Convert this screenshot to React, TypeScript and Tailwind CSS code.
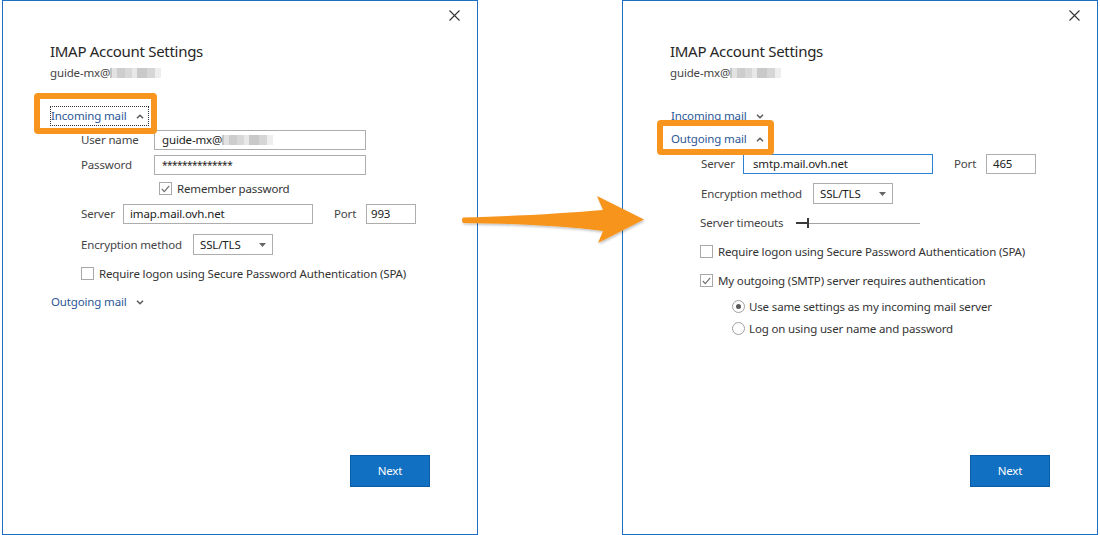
import React from "react";

function CloseIcon() {
  return (
    <svg width="11" height="11" viewBox="0 0 11 11">
      <path d="M0.5 0.5 L10.5 10.5 M10.5 0.5 L0.5 10.5" stroke="#333" strokeWidth="1.1" />
    </svg>
  );
}

function Chevron({ up }: { up?: boolean }) {
  return (
    <svg width="8" height="5" viewBox="0 0 8 5" className="shrink-0">
      <path
        d={up ? "M1 4.3 L4 1.3 L7 4.3" : "M1 0.8 L4 3.8 L7 0.8"}
        fill="none"
        stroke="#5a5a5a"
        strokeWidth="1.5"
      />
    </svg>
  );
}

// pixelated grey blur that hides the domain in the screenshot
function Blurred() {
  return (
    <span className="inline-flex h-[10px] items-center blur-[0.5px]">
      <span className="h-full w-[2px] bg-[#c4c4c4]" />
      <span className="h-full w-[5px] bg-[#e2e2e2]" />
      <span className="h-full w-[8px] bg-[#cdcdcd]" />
      <span className="h-full w-[7px] bg-[#d8d8d8]" />
      <span className="h-full w-[5px] bg-[#e8e8e8]" />
      <span className="h-full w-[10px] bg-[#c9c9c9]" />
      <span className="h-full w-[8px] bg-[#d6d6d6]" />
      <span className="h-full w-[6px] bg-[#eeeeee]" />
    </span>
  );
}

function Checkbox({ checked }: { checked?: boolean }) {
  return (
    <span className="inline-flex h-[13px] w-[13px] shrink-0 items-center justify-center border border-[#a8a8a8] bg-white">
      {checked && (
        <svg width="9" height="8" viewBox="0 0 9 8">
          <path d="M0.8 4 L3.3 6.6 L8.2 0.8" fill="none" stroke="#707070" strokeWidth="1.2" />
        </svg>
      )}
    </span>
  );
}

function Radio({ checked }: { checked?: boolean }) {
  return (
    <span className="inline-flex h-[13px] w-[13px] shrink-0 items-center justify-center rounded-full border border-[#a0a0a0] bg-white">
      {checked && <span className="h-[5px] w-[5px] rounded-full bg-[#595959]" />}
    </span>
  );
}

function Select() {
  return (
    <div className="flex h-[21px] w-[80px] items-center justify-between border border-[#adadad] pl-[6px] pr-[6px] text-[#222]">
      <span>SSL/TLS</span>
      <svg width="7" height="4" viewBox="0 0 7 4">
        <path d="M0 0 H7 L3.5 4 Z" fill="#666" />
      </svg>
    </div>
  );
}

function NextButton() {
  return (
    <div className="mb-[47px] ml-[347px] mt-auto flex h-[32px] w-[80px] items-center justify-center border border-[#0b5ca6] bg-[#1170c1] text-white">
      Next
    </div>
  );
}

function Header() {
  return (
    <>
      <div className="flex justify-end pr-[17px] pt-[9px]">
        <CloseIcon />
      </div>
      <div className="ml-[47px] mt-[19px] text-[15px] leading-[22px] tracking-[-0.3px] text-[#262626]">
        IMAP Account Settings
      </div>
      <div className="ml-[47px] mt-[3px] flex h-[16px] items-center text-[#444]">
        guide-mx@
        <Blurred />
      </div>
    </>
  );
}

function IncomingDialog() {
  return (
    <div className="relative flex h-[535px] w-[476px] shrink-0 flex-col border border-[#1d6fc1] bg-white">
      <Header />

      {/* Incoming mail (expanded, focused) */}
      <div className="ml-[47px] mt-[25px] flex h-[20px] w-[99px] items-center border border-dotted border-[#333] text-[#2b5797]">
        <span>Incoming mail</span>
        <span className="ml-[9px] flex">
          <Chevron up />
        </span>
      </div>

      <div className="ml-[78px] mt-[4px] flex h-[20px] items-center text-[#444]">
        <span className="w-[73px]">User name</span>
        <div className="flex h-[20px] w-[212px] items-center border border-[#adadad] pl-[7px] text-[#222]">
          guide-mx@
          <Blurred />
        </div>
      </div>

      <div className="ml-[78px] mt-[5px] flex h-[20px] items-center text-[#444]">
        <span className="w-[73px]">Password</span>
        <div className="flex h-[20px] w-[212px] items-center border border-[#adadad] pl-[7px] text-[10px] tracking-[-0.5px] text-[#222]">
          **************
        </div>
      </div>

      <div className="ml-[156px] mt-[5px] flex h-[17px] items-center gap-[5px] text-[#333]">
        <Checkbox checked />
        <span>Remember password</span>
      </div>

      <div className="ml-[78px] mt-[7px] flex h-[20px] items-center text-[#444]">
        <span className="w-[42px]">Server</span>
        <div className="flex h-[20px] w-[190px] items-center border border-[#adadad] pl-[6px] text-[#222]">
          imap.mail.ovh.net
        </div>
        <span className="ml-[21px] w-[32px]">Port</span>
        <div className="flex h-[20px] w-[50px] items-center border border-[#adadad] pl-[4px] text-[#222]">
          993
        </div>
      </div>

      <div className="ml-[78px] mt-[10px] flex h-[21px] items-center text-[#444]">
        <span className="w-[112px]">Encryption method</span>
        <Select />
      </div>

      <div className="ml-[78px] mt-[10px] flex h-[17px] items-center gap-[5px] text-[#333]">
        <Checkbox />
        <span>Require logon using Secure Password Authentication (SPA)</span>
      </div>

      <div className="ml-[48px] mt-[10px] flex h-[20px] items-center gap-[9px] text-[#2b5797]">
        <span>Outgoing mail</span>
        <Chevron />
      </div>

      <NextButton />

      {/* annotation frame */}
      <div className="absolute left-[31px] top-[92px] h-[41px] w-[123px] rounded-[4px] border-[6px] border-[#f7951f]" />
    </div>
  );
}

function OutgoingDialog() {
  return (
    <div className="relative flex h-[535px] w-[476px] shrink-0 flex-col border border-[#1d6fc1] bg-white">
      <Header />

      <div className="ml-[48px] mt-[25px] flex h-[20px] items-center gap-[9px] text-[#2b5797]">
        <span>Incoming mail</span>
        <Chevron />
      </div>

      <div className="ml-[48px] mt-[3px] flex h-[20px] items-center gap-[9px] text-[#2b5797]">
        <span>Outgoing mail</span>
        <Chevron up />
      </div>

      <div className="ml-[78px] mt-[5px] flex h-[20px] items-center text-[#444]">
        <span className="w-[42px]">Server</span>
        <div className="flex h-[20px] w-[190px] items-center border border-[#2f82d3] pl-[9px] text-[#222]">
          smtp.mail.ovh.net
        </div>
        <span className="ml-[21px] w-[32px]">Port</span>
        <div className="flex h-[20px] w-[50px] items-center border border-[#adadad] pl-[6px] text-[#222]">
          465
        </div>
      </div>

      <div className="ml-[78px] mt-[9px] flex h-[21px] items-center text-[#444]">
        <span className="w-[112px]">Encryption method</span>
        <Select />
      </div>

      <div className="ml-[77px] mt-[11px] flex h-[16px] items-center text-[#444]">
        <span className="w-[96px]">Server timeouts</span>
        <div className="relative h-[10px] w-[124px]">
          <div className="absolute left-0 right-0 top-[5px] h-px bg-[#a3a3a3]" />
          <div className="absolute left-0 top-[4px] h-[2px] w-[11px] bg-[#3a3a3a]" />
          <div className="absolute left-[11px] top-0 h-[10px] w-[2px] bg-[#3a3a3a]" />
        </div>
      </div>

      <div className="ml-[77px] mt-[12px] flex h-[17px] items-center gap-[5px] text-[#333]">
        <Checkbox />
        <span>Require logon using Secure Password Authentication (SPA)</span>
      </div>

      <div className="ml-[77px] mt-[12px] flex h-[17px] items-center gap-[5px] text-[#333]">
        <Checkbox checked />
        <span>My outgoing (SMTP) server requires authentication</span>
      </div>

      <div className="ml-[109px] mt-[9px] flex h-[17px] items-center gap-[4px] text-[#333]">
        <Radio checked />
        <span>Use same settings as my incoming mail server</span>
      </div>

      <div className="ml-[109px] mt-[5px] flex h-[17px] items-center gap-[4px] text-[#333]">
        <Radio />
        <span>Log on using user name and password</span>
      </div>

      <NextButton />

      <div className="absolute left-[34px] top-[119px] h-[35px] w-[117px] rounded-[4px] border-[6px] border-[#f7951f]" />
    </div>
  );
}

export default function App() {
  return (
    <div className="relative flex h-[535px] w-[1100px] gap-[144px] overflow-hidden bg-white pl-[2px] font-['Noto_Sans','Open_Sans',sans-serif] text-[11.5px] tracking-[-0.15px]">
      <IncomingDialog />
      <OutgoingDialog />

      {/* orange arrow between the two dialogs */}
      <svg
        className="pointer-events-none absolute left-0 top-0"
        width="1100"
        height="535"
        viewBox="0 0 1100 535"
      >
        <defs>
          <filter id="arrowShadow" x="-10%" y="-50%" width="120%" height="200%">
            <feDropShadow dx="1" dy="1.5" stdDeviation="1.2" floodColor="#000" floodOpacity="0.25" />
          </filter>
        </defs>
        <path
          d="M463 217.5 C520 216 570 213 603 210 L597 196 L644 219.5 L598 243 L603 231 C570 226.5 520 223.5 463 223 Q461 220 463 217.5 Z"
          fill="#f7941d"
          filter="url(#arrowShadow)"
        />
      </svg>
    </div>
  );
}
